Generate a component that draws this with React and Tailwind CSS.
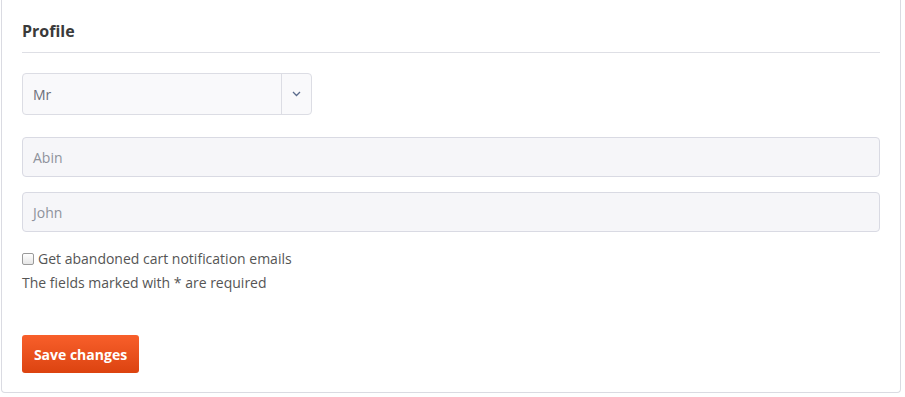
export default function App() {
  return (
    <div className="h-[397px] bg-white pl-px pr-[4px] pb-[4px] font-['Open_Sans',sans-serif]">
      <div className="h-full rounded-b border border-t-0 border-[#dadbe2] px-[20px] pt-[21px]">
        <h2 className="text-[16px] font-bold leading-5 text-[#3a3a3a]">Profile</h2>
        <div className="mt-[11px] h-px bg-[#dedfe5]" />

        <div className="mt-[20px] flex h-[42px] w-[290px] rounded border border-[#dcdde4] bg-[#f9f9fb]">
          <div className="flex flex-1 items-center pl-[10px] text-[14px] text-[#6b6f7a]">Mr</div>
          <div className="flex w-[30px] items-center justify-center border-l border-[#dcdde4]">
            <svg width="9" height="6" viewBox="0 0 9 6" fill="none">
              <path d="M1 1l3.5 3.5L8 1" stroke="#5a6b8c" strokeWidth="1.3" />
            </svg>
          </div>
        </div>

        <div className="mt-[22px] flex h-[40px] items-center rounded border border-[#d9dae3] bg-[#f6f6f9] pl-[10px] text-[14px] text-[#8e929c]">
          Abin
        </div>
        <div className="mt-[15px] flex h-[40px] items-center rounded border border-[#d9dae3] bg-[#f6f6f9] pl-[10px] text-[14px] text-[#8e929c]">
          John
        </div>

        <label className="mt-[17px] flex items-center gap-[4px] text-[14px] leading-5 text-[#555]">
          <span className="h-[12px] w-[12px] rounded-[2px] border border-[#9a9a9a] bg-gradient-to-b from-white to-[#e6e6e6]" />
          Get abandoned cart notification emails
        </label>
        <p className="mt-[4px] text-[14px] leading-5 text-[#555]">The fields marked with * are required</p>

        <button className="mt-[42px] h-[38px] w-[117px] rounded-[3px] bg-gradient-to-b from-[#f85f2a] to-[#dc430f] text-[14px] font-bold text-white">
          Save changes
        </button>
      </div>
    </div>
  );
}
